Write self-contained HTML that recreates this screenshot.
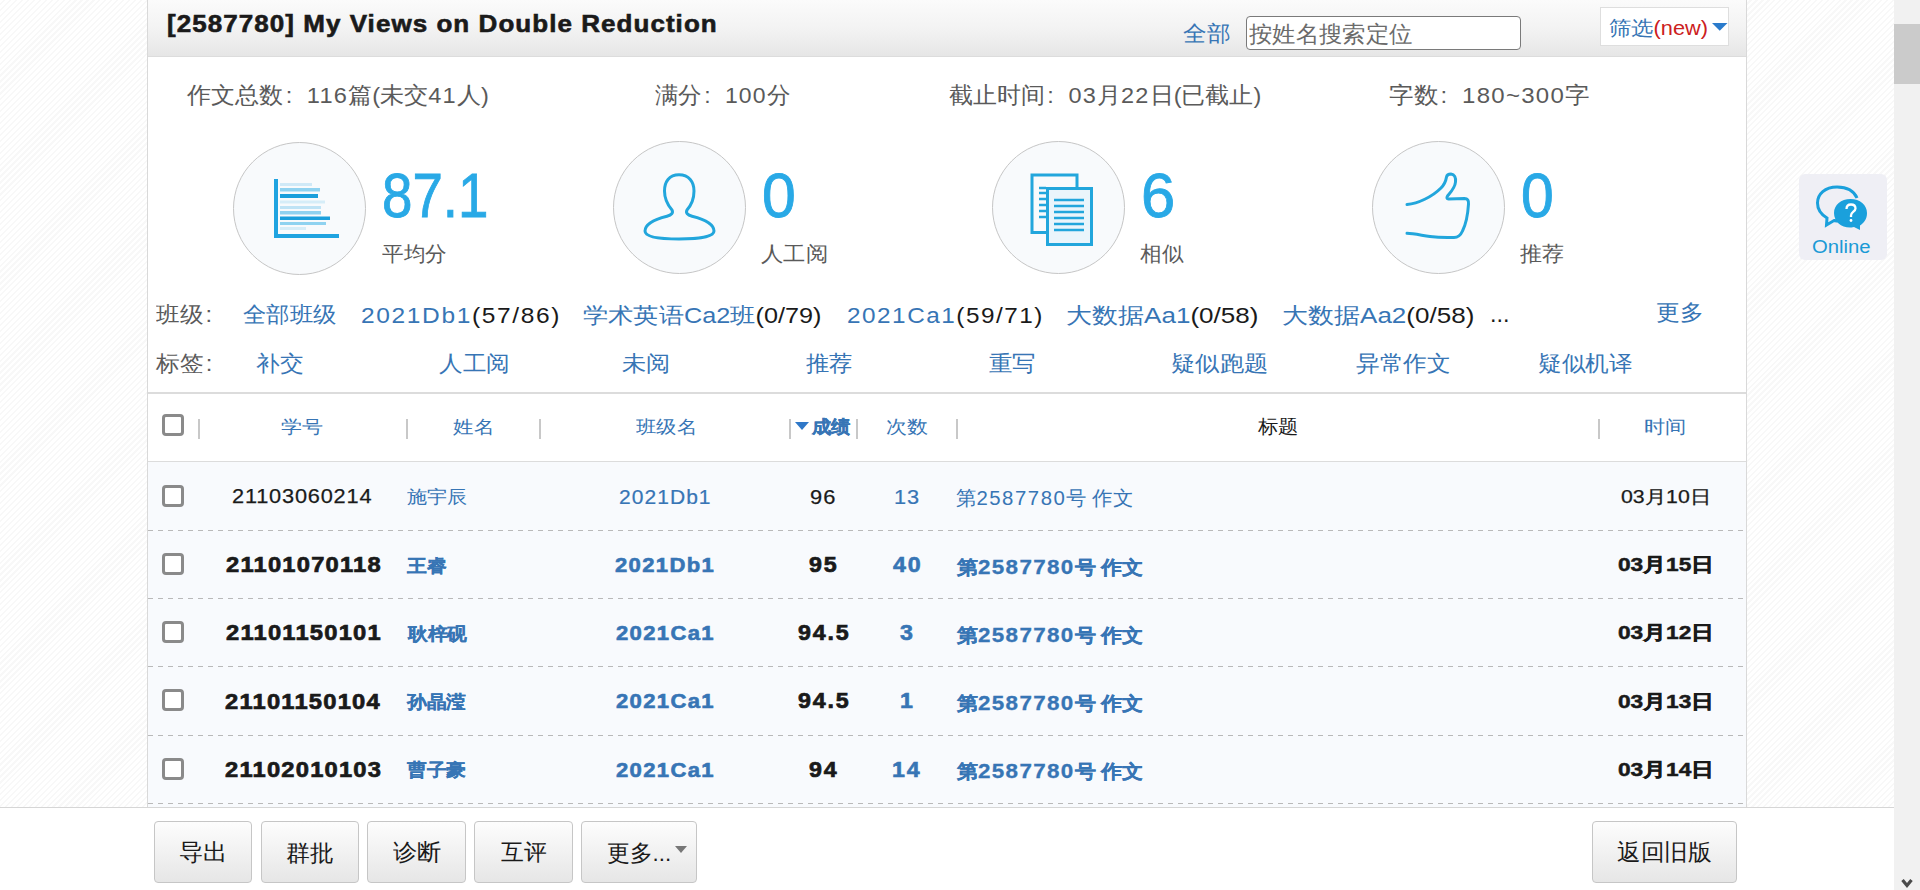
<!DOCTYPE html>
<html><head><meta charset="utf-8">
<style>
*{margin:0;padding:0;box-sizing:border-box}
html,body{width:1920px;height:890px;overflow:hidden}
body{font-family:"Liberation Sans",sans-serif;position:relative;background:#fff;
background-image:repeating-linear-gradient(135deg,#ffffff 0px,#ffffff 2.6px,#f8f8f8 2.6px,#f8f8f8 4.2px);}
.a{position:absolute;white-space:nowrap;line-height:1}
.t{position:absolute;white-space:nowrap;line-height:1;transform-origin:0 0}
.panel{position:absolute;left:147px;top:0;width:1600px;height:890px;background:#fff;border-left:1px solid #d9d9d9;border-right:1px solid #d9d9d9}
.hdr{position:absolute;left:148px;top:0;width:1598px;height:57px;background:linear-gradient(#fbfbfb,#f3f3f3 50%,#e6e6e6);border-bottom:1px solid #dcdcdc}
.circ{position:absolute;width:133px;height:133px;border-radius:50%;border:1.8px solid #c6c6c6;background:#f8fafc;top:140.7px}
.sep{position:absolute;top:419px;width:2px;height:20px;background:#c8c8c8}
.cb{position:absolute;left:162px;width:22px;height:22px;border:3px solid #8a8a8a;border-radius:4px;background:#fff}
.dash{position:absolute;left:148px;width:1598px;height:1px;background-image:linear-gradient(90deg,#b9b9b9 0,#b9b9b9 5px,transparent 5px,transparent 10px);background-size:10px 1px}
.btn{position:absolute;top:821px;height:62px;border:1px solid #c6c6c6;border-radius:4px;background:linear-gradient(#fdfdfd,#e6e6e6)}
</style></head><body>
<div class="panel"></div>
<div class="hdr"></div>
<div class="a" style="left:1246px;top:16px;width:275px;height:34px;border:1px solid #7a7a7a;border-radius:4px;background:#fff"></div>
<div class="a" style="left:1600px;top:7px;width:129px;height:39px;border:1px solid #dedede;background:#fff"></div>
<svg class="a" style="left:1711.5px;top:23px" width="17" height="10"><path d="M0,0 L15.5,0 L7.75,7.8 Z" fill="#2a7bcc"/></svg>

<div class="circ" style="left:232.8px;top:142.2px"></div>
<div class="circ" style="left:612.6px"></div>
<div class="circ" style="left:991.8px"></div>
<div class="circ" style="left:1371.8px"></div>

<svg class="a" style="left:0;top:0" width="1920" height="300">
 <rect x="274" y="179" width="4" height="59" fill="#1fa3e0"/>
 <rect x="274" y="234" width="65" height="4" fill="#1fa3e0"/>
 <rect x="280" y="183" width="32" height="3" fill="#cfe9f7"/>
 <rect x="280" y="188" width="40" height="3.5" fill="#8fd2f0"/>
 <rect x="280" y="194" width="38" height="4" fill="#1a9fdc"/>
 <rect x="280" y="200.5" width="45" height="3" fill="#d6edf8"/>
 <rect x="280" y="206" width="41" height="3" fill="#bfe3f5"/>
 <rect x="280" y="211" width="41" height="3.5" fill="#8fd2f0"/>
 <rect x="280" y="216.5" width="50" height="3.5" fill="#1a9fdc"/>
 <rect x="280" y="222" width="46" height="3" fill="#8fd2f0"/>
 <rect x="280" y="227" width="26" height="3" fill="#d6edf8"/>
 <path d="M679,174.8 C669,174.8 664.5,182 664.5,191 C664.5,200 668.5,206 672,210 C673.5,213 671.5,215 667,216.2 C654,219.5 645,224 645,231 C645,237 660,239 679,239 C698,239 714,237 714,231 C714,224 705,219.5 692,216.2 C687.5,215 685.5,213 687,210 C690.5,206 694,200 694,191 C694,182 689,174.8 679,174.8 Z" fill="none" stroke="#22a6dc" stroke-width="3"/>
 <path d="M1046,232.5 L1032,232.5 L1032,175 L1077,175 L1077,187" fill="none" stroke="#22a6dc" stroke-width="3"/>
 <rect x="1047.5" y="188.5" width="44" height="56" fill="#eaf5fb" stroke="#22a6dc" stroke-width="3"/>
 <g stroke="#22a6dc" stroke-width="2.5">
  <line x1="1054" y1="200" x2="1084" y2="200"/><line x1="1054" y1="206" x2="1084" y2="206"/>
  <line x1="1054" y1="212" x2="1084" y2="212"/><line x1="1054" y1="218" x2="1084" y2="218"/>
  <line x1="1054" y1="224" x2="1084" y2="224"/><line x1="1054" y1="230" x2="1084" y2="230"/>
  <line x1="1039" y1="188" x2="1046" y2="188"/><line x1="1039" y1="193" x2="1046" y2="193"/>
  <line x1="1039" y1="199" x2="1046" y2="199"/><line x1="1039" y1="205" x2="1046" y2="205"/>
  <line x1="1039" y1="211" x2="1046" y2="211"/><line x1="1039" y1="217" x2="1046" y2="217"/>
 </g>
 <path d="M1407,204.6 C1418,203.5 1432,197 1441,188 C1444.5,184.5 1446,180 1446.5,177 C1447,174.5 1449,174 1451,174 C1454.5,174.2 1456,177.5 1455.5,182 C1455,188 1450,193 1447.5,196 C1446.5,197.5 1446.8,199 1448.5,199 L1464.5,198.5 C1467.5,198.5 1468.8,200.5 1468.5,204 C1468,212 1466,224 1462.5,231 C1460.5,235.5 1458.5,237.5 1454,237.5 C1445,237.8 1437,237.5 1430,236.5 C1420,235 1413,233.5 1407,233.3" fill="none" stroke="#22a6dc" stroke-width="3" stroke-linecap="round" stroke-linejoin="round"/>
</svg>

<div class="a" style="left:148px;top:392px;width:1598px;height:2px;background:#dcdcdc"></div>
<div class="a" style="left:148px;top:461px;width:1598px;height:1px;background:#dcdcdc"></div>
<div class="cb" style="top:414px"></div>
<div class="sep" style="left:198px"></div>
<div class="sep" style="left:406px"></div>
<div class="sep" style="left:539px"></div>
<div class="sep" style="left:789px"></div>
<div class="sep" style="left:856px"></div>
<div class="sep" style="left:956px"></div>
<div class="sep" style="left:1598px"></div>
<svg class="a" style="left:795px;top:422px" width="15" height="9"><path d="M0,0 L14,0 L7,8 Z" fill="#2f78c8"/></svg>

<div class="a" style="left:148px;top:462px;width:1598px;height:428px;background:#f8fafd"></div>
<div class="dash" style="top:530px"></div>
<div class="dash" style="top:598px"></div>
<div class="dash" style="top:666px"></div>
<div class="dash" style="top:735px"></div>
<div class="dash" style="top:803px"></div>
<div class="cb" style="top:484.60px"></div>
<div class="cb" style="top:552.85px"></div>
<div class="cb" style="top:621.10px"></div>
<div class="cb" style="top:689.35px"></div>
<div class="cb" style="top:757.60px"></div>


<div class="a" style="left:1799px;top:174px;width:88px;height:86px;background:#efeff5;border-radius:6px"></div>
<svg class="a" style="left:1810px;top:180px" width="70" height="56">
 <path d="M27,7 C15,7 7.5,14 7.5,23 C7.5,30 12,35 17,38 L16.5,45 L24,40.5 C26,41 28,41 30,41" fill="none" stroke="#1aa0dc" stroke-width="3"/>
 <path d="M27,7 C37,7 44,11 47,18" fill="none" stroke="#1aa0dc" stroke-width="3"/>
 <path d="M40.5,19 C50,19 57,25 57,33 C57,39 54,43 50,45.5 L50,50 L44,47 C42,47.5 41,47.5 40,47.5 C31,47.5 24,41.5 24,33 C24,25 31,19 40.5,19 Z" fill="#1aa0dc"/>
 <path d="M36.5,29 C36.5,26 38.5,24.5 41,24.5 C43.5,24.5 45.5,26 45.5,28.5 C45.5,31.5 41,32 41,35.5 L41,37" fill="none" stroke="#fff" stroke-width="2.3"/>
 <circle cx="41" cy="40.5" r="1.4" fill="#fff"/>
</svg>

<div class="t" style="left:166.72px;top:11.85px;font-size:24.00px;font-weight:bold;color:#1a1a1a;transform:scaleX(1.0830);letter-spacing:0.97px;-webkit-text-stroke:0.6px #1a1a1a;">[2587780] My Views on Double Reduction</div>
<div class="t" style="left:1182.67px;top:23.25px;font-size:22.20px;font-weight:normal;color:#3775b5;transform:scaleX(1.0774);">全部</div>
<div class="t" style="left:1249.40px;top:23.95px;font-size:22.60px;font-weight:normal;color:#6b6b6b;transform:scaleX(1.0156);">按姓名搜索定位</div>
<div class="t" style="left:1608.69px;top:18.55px;font-size:19.50px;font-weight:normal;color:#3775b5;transform:scaleX(1.1149);">筛选<span style="color:#cc2020">(new)</span></div>
<div class="t" style="left:187.30px;top:84.60px;font-size:22.50px;font-weight:normal;color:#5a5a5a;transform:scaleX(1.0466);">作文总数<span style="display:inline-block;width:1em;padding-left:0.1em">:</span><span style="letter-spacing:1.2px">116</span>篇(未交<span style="letter-spacing:1.2px">41</span>人)</div>
<div class="t" style="left:654.60px;top:84.75px;font-size:22.50px;font-weight:normal;color:#5a5a5a;transform:scaleX(1.0201);">满分<span style="display:inline-block;width:1em;padding-left:0.1em">:</span><span style="letter-spacing:1.2px">100</span>分</div>
<div class="t" style="left:948.86px;top:84.75px;font-size:22.50px;font-weight:normal;color:#5a5a5a;transform:scaleX(1.0431);">截止时间<span style="display:inline-block;width:1em;padding-left:0.1em">:</span><span style="letter-spacing:1.2px">03</span>月<span style="letter-spacing:1.2px">22</span>日(已截止)</div>
<div class="t" style="left:1388.73px;top:85.05px;font-size:22.50px;font-weight:normal;color:#5a5a5a;transform:scaleX(1.0665);">字数<span style="display:inline-block;width:1em;padding-left:0.1em">:</span><span style="letter-spacing:1.2px">180~300</span>字</div>
<div class="t" style="left:382.48px;top:164.00px;font-size:63.41px;font-weight:normal;color:#29a9e6;transform:scaleX(0.8622);-webkit-text-stroke:0.9px #29a9e6;">87.1</div>
<div class="t" style="left:761.68px;top:164.10px;font-size:63.41px;font-weight:normal;color:#29a9e6;transform:scaleX(0.9581);-webkit-text-stroke:0.9px #29a9e6;">0</div>
<div class="t" style="left:1140.69px;top:164.00px;font-size:63.41px;font-weight:normal;color:#29a9e6;transform:scaleX(0.9700);-webkit-text-stroke:0.9px #29a9e6;">6</div>
<div class="t" style="left:1520.84px;top:164.00px;font-size:63.41px;font-weight:normal;color:#29a9e6;transform:scaleX(0.9290);-webkit-text-stroke:0.9px #29a9e6;">0</div>
<div class="t" style="left:381.70px;top:242.60px;font-size:21.00px;font-weight:normal;color:#5a5a5a;transform:scaleX(1.0274);">平均分</div>
<div class="t" style="left:760.74px;top:242.65px;font-size:21.00px;font-weight:normal;color:#5a5a5a;transform:scaleX(1.0633);">人工阅</div>
<div class="t" style="left:1139.87px;top:242.75px;font-size:21.00px;font-weight:normal;color:#5a5a5a;transform:scaleX(1.0293);">相似</div>
<div class="t" style="left:1520.00px;top:242.75px;font-size:21.00px;font-weight:normal;color:#5a5a5a;transform:scaleX(1.0512);">推荐</div>
<div class="t" style="left:156.25px;top:304.45px;font-size:22.00px;font-weight:normal;color:#5a5a5a;transform:scaleX(1.0735);">班级<span style="display:inline-block;width:1em;padding-left:0.1em">:</span></div>
<div class="t" style="left:242.69px;top:304.45px;font-size:22.00px;font-weight:normal;color:#3775b5;transform:scaleX(1.0634);">全部班级</div>
<div class="t" style="left:361.36px;top:306.05px;font-size:21.50px;font-weight:normal;color:#3775b5;transform:scaleX(1.1399);letter-spacing:1.44px;">2021Db1<span style="color:#1a1a1a">(57/86)</span></div>
<div class="t" style="left:583.25px;top:305.45px;font-size:22.00px;font-weight:normal;color:#3775b5;transform:scaleX(1.1476);">学术英语Ca2班<span style="color:#1a1a1a">(0/79)</span></div>
<div class="t" style="left:846.87px;top:306.05px;font-size:21.50px;font-weight:normal;color:#3775b5;transform:scaleX(1.1301);letter-spacing:1.35px;">2021Ca1<span style="color:#1a1a1a">(59/71)</span></div>
<div class="t" style="left:1066.02px;top:305.45px;font-size:22.00px;font-weight:normal;color:#3775b5;transform:scaleX(1.1831);">大数据Aa1<span style="color:#1a1a1a">(0/58)</span></div>
<div class="t" style="left:1282.02px;top:305.45px;font-size:22.00px;font-weight:normal;color:#3775b5;transform:scaleX(1.1825);">大数据Aa2<span style="color:#1a1a1a">(0/58)</span></div>
<div class="t" style="left:1489.65px;top:302.30px;font-size:24.00px;font-weight:normal;color:#1a1a1a;transform:scaleX(0.9750);">...</div>
<div class="t" style="left:1655.82px;top:301.65px;font-size:22.00px;font-weight:normal;color:#3775b5;transform:scaleX(1.0805);">更多</div>
<div class="t" style="left:156.00px;top:353.25px;font-size:22.00px;font-weight:normal;color:#5a5a5a;transform:scaleX(1.0784);">标签<span style="display:inline-block;width:1em;padding-left:0.1em">:</span></div>
<div class="t" style="left:255.92px;top:352.90px;font-size:22.00px;font-weight:normal;color:#3775b5;transform:scaleX(1.0786);">补交</div>
<div class="t" style="left:439.33px;top:353.40px;font-size:22.00px;font-weight:normal;color:#3775b5;transform:scaleX(1.0730);">人工阅</div>
<div class="t" style="left:622.10px;top:353.40px;font-size:22.00px;font-weight:normal;color:#3775b5;transform:scaleX(1.0976);">未阅</div>
<div class="t" style="left:806.25px;top:353.40px;font-size:22.00px;font-weight:normal;color:#3775b5;transform:scaleX(1.0593);">推荐</div>
<div class="t" style="left:989.20px;top:353.40px;font-size:22.00px;font-weight:normal;color:#3775b5;transform:scaleX(1.0651);">重写</div>
<div class="t" style="left:1171.40px;top:353.40px;font-size:22.00px;font-weight:normal;color:#3775b5;transform:scaleX(1.1029);">疑似跑题</div>
<div class="t" style="left:1355.80px;top:353.40px;font-size:22.00px;font-weight:normal;color:#3775b5;transform:scaleX(1.0756);">异常作文</div>
<div class="t" style="left:1538.12px;top:353.40px;font-size:22.00px;font-weight:normal;color:#3775b5;transform:scaleX(1.0756);">疑似机译</div>
<div class="t" style="left:281.33px;top:417.65px;font-size:18.00px;font-weight:normal;color:#3775b5;transform:scaleX(1.1706);">学号</div>
<div class="t" style="left:453.40px;top:417.80px;font-size:18.00px;font-weight:normal;color:#3775b5;transform:scaleX(1.1394);">姓名</div>
<div class="t" style="left:635.50px;top:418.30px;font-size:18.00px;font-weight:normal;color:#3775b5;transform:scaleX(1.1333);">班级名</div>
<div class="t" style="left:812.40px;top:418.00px;font-size:18.00px;font-weight:bold;color:#3775b5;transform:scaleX(1.0667);-webkit-text-stroke:0.3px #3775b5;">成绩</div>
<div class="t" style="left:885.74px;top:418.00px;font-size:18.00px;font-weight:normal;color:#3775b5;transform:scaleX(1.1618);">次数</div>
<div class="t" style="left:1257.50px;top:418.40px;font-size:18.60px;font-weight:normal;color:#1a1a1a;transform:scaleX(1.0703);">标题</div>
<div class="t" style="left:1644.42px;top:417.95px;font-size:18.00px;font-weight:normal;color:#3775b5;transform:scaleX(1.1788);">时间</div>
<div class="t" style="left:1812.44px;top:239.20px;font-size:17.57px;font-weight:normal;color:#1a9ad6;transform:scaleX(1.1551);">Online</div>
<div class="t" style="left:232.33px;top:486.35px;font-size:20.43px;font-weight:normal;color:#1a1a1a;transform:scaleX(1.0656);letter-spacing:0.75px;-webkit-text-stroke:0.25px #1a1a1a;">21103060214</div>
<div class="t" style="left:225.80px;top:554.10px;font-size:21.71px;font-weight:bold;color:#1a1a1a;transform:scaleX(1.0931);letter-spacing:1.11px;-webkit-text-stroke:0.7px #1a1a1a;">21101070118</div>
<div class="t" style="left:406.70px;top:487.70px;font-size:18.00px;font-weight:normal;color:#3775b5;transform:scaleX(1.1189);">施宇辰</div>
<div class="t" style="left:406.70px;top:556.50px;font-size:18.00px;font-weight:bold;color:#3775b5;transform:scaleX(1.0972);-webkit-text-stroke:0.15px #3775b5;">王睿</div>
<div class="t" style="left:618.92px;top:488.00px;font-size:19.47px;font-weight:normal;color:#3775b5;transform:scaleX(1.0805);letter-spacing:0.96px;-webkit-text-stroke:0.2px #3775b5;">2021Db1</div>
<div class="t" style="left:615.40px;top:554.75px;font-size:20.13px;font-weight:bold;color:#3775b5;transform:scaleX(1.0970);letter-spacing:1.22px;-webkit-text-stroke:0.6px #3775b5;">2021Db1</div>
<div class="t" style="left:809.95px;top:486.50px;font-size:20.86px;font-weight:normal;color:#1a1a1a;transform:scaleX(1.0477);letter-spacing:1.00px;-webkit-text-stroke:0.25px #1a1a1a;">96</div>
<div class="t" style="left:809.40px;top:553.75px;font-size:21.57px;font-weight:bold;color:#1a1a1a;transform:scaleX(1.0771);letter-spacing:1.72px;-webkit-text-stroke:0.7px #1a1a1a;">95</div>
<div class="t" style="left:894.26px;top:486.50px;font-size:20.86px;font-weight:normal;color:#3775b5;transform:scaleX(1.0429);letter-spacing:0.86px;-webkit-text-stroke:0.2px #3775b5;">13</div>
<div class="t" style="left:892.70px;top:553.75px;font-size:21.57px;font-weight:bold;color:#3775b5;transform:scaleX(1.0771);letter-spacing:1.72px;-webkit-text-stroke:0.6px #3775b5;">40</div>
<div class="t" style="left:955.98px;top:488.73px;font-size:19.95px;font-weight:normal;color:#3775b5;transform:scaleX(1.0203);">第<span style="letter-spacing:1.5px">2587780</span>号 作文</div>
<div class="t" style="left:957.20px;top:556.55px;font-size:18.90px;font-weight:bold;color:#3775b5;transform:scaleX(1.1078);-webkit-text-stroke:0.2px #3775b5;">第<span style="font-size:1.07em;letter-spacing:1.2px;-webkit-text-stroke:0.3px #3775b5">2587780</span>号 作文</div>
<div class="t" style="left:1620.80px;top:488.77px;font-size:17.95px;font-weight:normal;color:#1a1a1a;transform:scaleX(1.1877);-webkit-text-stroke:0.25px #1a1a1a;">03月10日</div>
<div class="t" style="left:1617.50px;top:556.23px;font-size:18.89px;font-weight:bold;color:#1a1a1a;transform:scaleX(1.2019);-webkit-text-stroke:0.5px #1a1a1a;">03月15日</div>
<div class="t" style="left:225.80px;top:622.35px;font-size:21.71px;font-weight:bold;color:#1a1a1a;transform:scaleX(1.0931);letter-spacing:1.11px;-webkit-text-stroke:0.7px #1a1a1a;">21101150101</div>
<div class="t" style="left:407.80px;top:624.75px;font-size:18.00px;font-weight:bold;color:#3775b5;transform:scaleX(1.0972);-webkit-text-stroke:0.15px #3775b5;">耿梓砚</div>
<div class="t" style="left:615.95px;top:623.00px;font-size:20.13px;font-weight:bold;color:#3775b5;transform:scaleX(1.0970);letter-spacing:1.22px;-webkit-text-stroke:0.6px #3775b5;">2021Ca1</div>
<div class="t" style="left:797.86px;top:622.00px;font-size:21.57px;font-weight:bold;color:#1a1a1a;transform:scaleX(1.0771);letter-spacing:1.72px;-webkit-text-stroke:0.7px #1a1a1a;">94.5</div>
<div class="t" style="left:900.09px;top:622.00px;font-size:21.57px;font-weight:bold;color:#3775b5;transform:scaleX(1.0771);letter-spacing:1.72px;-webkit-text-stroke:0.6px #3775b5;">3</div>
<div class="t" style="left:957.20px;top:624.80px;font-size:18.90px;font-weight:bold;color:#3775b5;transform:scaleX(1.1078);-webkit-text-stroke:0.2px #3775b5;">第<span style="font-size:1.07em;letter-spacing:1.2px;-webkit-text-stroke:0.3px #3775b5">2587780</span>号 作文</div>
<div class="t" style="left:1617.50px;top:624.48px;font-size:18.89px;font-weight:bold;color:#1a1a1a;transform:scaleX(1.2019);-webkit-text-stroke:0.5px #1a1a1a;">03月12日</div>
<div class="t" style="left:225.25px;top:690.60px;font-size:21.71px;font-weight:bold;color:#1a1a1a;transform:scaleX(1.0931);letter-spacing:1.11px;-webkit-text-stroke:0.7px #1a1a1a;">21101150104</div>
<div class="t" style="left:406.70px;top:693.00px;font-size:18.00px;font-weight:bold;color:#3775b5;transform:scaleX(1.0972);-webkit-text-stroke:0.15px #3775b5;">孙晶滢</div>
<div class="t" style="left:615.95px;top:691.25px;font-size:20.13px;font-weight:bold;color:#3775b5;transform:scaleX(1.0970);letter-spacing:1.22px;-webkit-text-stroke:0.6px #3775b5;">2021Ca1</div>
<div class="t" style="left:797.86px;top:690.25px;font-size:21.57px;font-weight:bold;color:#1a1a1a;transform:scaleX(1.0771);letter-spacing:1.72px;-webkit-text-stroke:0.7px #1a1a1a;">94.5</div>
<div class="t" style="left:899.55px;top:690.25px;font-size:21.57px;font-weight:bold;color:#3775b5;transform:scaleX(1.0771);letter-spacing:1.72px;-webkit-text-stroke:0.6px #3775b5;">1</div>
<div class="t" style="left:957.20px;top:693.05px;font-size:18.90px;font-weight:bold;color:#3775b5;transform:scaleX(1.1078);-webkit-text-stroke:0.2px #3775b5;">第<span style="font-size:1.07em;letter-spacing:1.2px;-webkit-text-stroke:0.3px #3775b5">2587780</span>号 作文</div>
<div class="t" style="left:1617.50px;top:692.73px;font-size:18.89px;font-weight:bold;color:#1a1a1a;transform:scaleX(1.2019);-webkit-text-stroke:0.5px #1a1a1a;">03月13日</div>
<div class="t" style="left:225.25px;top:758.85px;font-size:21.71px;font-weight:bold;color:#1a1a1a;transform:scaleX(1.0931);letter-spacing:1.11px;-webkit-text-stroke:0.7px #1a1a1a;">21102010103</div>
<div class="t" style="left:406.70px;top:761.25px;font-size:18.00px;font-weight:bold;color:#3775b5;transform:scaleX(1.0972);-webkit-text-stroke:0.15px #3775b5;">曹子豪</div>
<div class="t" style="left:615.95px;top:759.50px;font-size:20.13px;font-weight:bold;color:#3775b5;transform:scaleX(1.0970);letter-spacing:1.22px;-webkit-text-stroke:0.6px #3775b5;">2021Ca1</div>
<div class="t" style="left:809.40px;top:758.50px;font-size:21.57px;font-weight:bold;color:#1a1a1a;transform:scaleX(1.0771);letter-spacing:1.72px;-webkit-text-stroke:0.7px #1a1a1a;">94</div>
<div class="t" style="left:892.16px;top:758.50px;font-size:21.57px;font-weight:bold;color:#3775b5;transform:scaleX(1.0771);letter-spacing:1.72px;-webkit-text-stroke:0.6px #3775b5;">14</div>
<div class="t" style="left:957.20px;top:761.30px;font-size:18.90px;font-weight:bold;color:#3775b5;transform:scaleX(1.1078);-webkit-text-stroke:0.2px #3775b5;">第<span style="font-size:1.07em;letter-spacing:1.2px;-webkit-text-stroke:0.3px #3775b5">2587780</span>号 作文</div>
<div class="t" style="left:1617.50px;top:760.98px;font-size:18.89px;font-weight:bold;color:#1a1a1a;transform:scaleX(1.2019);-webkit-text-stroke:0.5px #1a1a1a;">03月14日</div>

<div class="a" style="left:0;top:807px;width:1894px;height:83px;background:#fff;border-top:1px solid #d6d6d6"></div>
<div class="btn" style="left:154px;width:98px"></div>
<div class="btn" style="left:261px;width:98px"></div>
<div class="btn" style="left:367px;width:99px"></div>
<div class="btn" style="left:474px;width:99px"></div>
<div class="btn" style="left:581px;width:116px"></div>
<svg class="a" style="left:675px;top:846px" width="13" height="8"><path d="M0,0 L12,0 L6,7 Z" fill="#777"/></svg>
<div class="btn" style="left:1592px;width:145px"></div>

<div class="t" style="left:178.94px;top:842.00px;font-size:22.50px;font-weight:normal;color:#1a1a1a;transform:scaleX(1.0571);">导出</div>
<div class="t" style="left:285.86px;top:842.50px;font-size:22.50px;font-weight:normal;color:#1a1a1a;transform:scaleX(1.0364);">群批</div>
<div class="t" style="left:392.64px;top:842.40px;font-size:22.50px;font-weight:normal;color:#1a1a1a;transform:scaleX(1.0568);">诊断</div>
<div class="t" style="left:501.30px;top:841.90px;font-size:22.50px;font-weight:normal;color:#1a1a1a;transform:scaleX(0.9933);">互评</div>
<div class="t" style="left:606.91px;top:842.50px;font-size:22.50px;font-weight:normal;color:#1a1a1a;transform:scaleX(0.9903);">更多...</div>
<div class="t" style="left:1616.77px;top:841.95px;font-size:22.50px;font-weight:normal;color:#1a1a1a;transform:scaleX(1.0289);">返回旧版</div>

<div class="a" style="left:1894px;top:0;width:26px;height:890px;background:#f1f1f1"></div>
<div class="a" style="left:1894px;top:24px;width:26px;height:60px;background:#cbcbcb"></div>
<svg class="a" style="left:1898px;top:874px" width="18" height="16"><path d="M4.5,6 L9,11.5 L13.5,6" fill="none" stroke="#4a4a4a" stroke-width="3.2"/></svg>
</body></html>
